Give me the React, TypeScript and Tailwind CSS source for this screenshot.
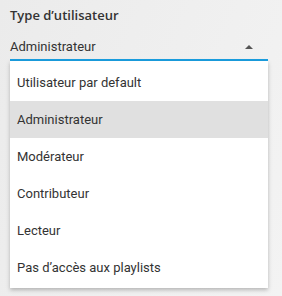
import React from "react";

const items = [
  "Utilisateur par default",
  "Administrateur",
  "Modérateur",
  "Contributeur",
  "Lecteur",
  "Pas d’accès aux playlists",
];

export default function App() {
  return (
    <div className="w-[282px] h-[296px] overflow-hidden bg-[linear-gradient(110deg,#ebebeb_0%,#efefef_50%,#f3f3f3_100%)] px-[10px] pt-[6px] relative">
      <div
        className="text-[13px] leading-[18px] font-semibold text-[#333]"
        style={{ fontFamily: '"Open Sans", sans-serif' }}
      >
        Type d’utilisateur
      </div>
      <div className="relative w-[258px] mt-[13px]" style={{ fontFamily: "Roboto, sans-serif" }}>
        <div className="flex items-center justify-between h-[20px] text-[13px] text-[#333] border-b-2 border-[#1a9ee0] pb-[2px] box-content">
          <span>Administrateur</span>
          <span className="mr-[15px] w-0 h-0 border-l-[4px] border-r-[4px] border-b-[4px] border-l-transparent border-r-transparent border-b-[#555]" />
        </div>
        <div className="bg-white shadow-[0_2px_4px_rgba(0,0,0,0.25)] pt-[3px] pb-[2px]">
          {items.map((t) => (
            <div
              key={t}
              className={`h-[37px] flex items-center px-[7px] text-[13px] text-[#333] ${
                t === "Administrateur" ? "bg-[#e0e0e0]" : ""
              }`}
            >
              {t}
            </div>
          ))}
        </div>
      </div>
    </div>
  );
}
